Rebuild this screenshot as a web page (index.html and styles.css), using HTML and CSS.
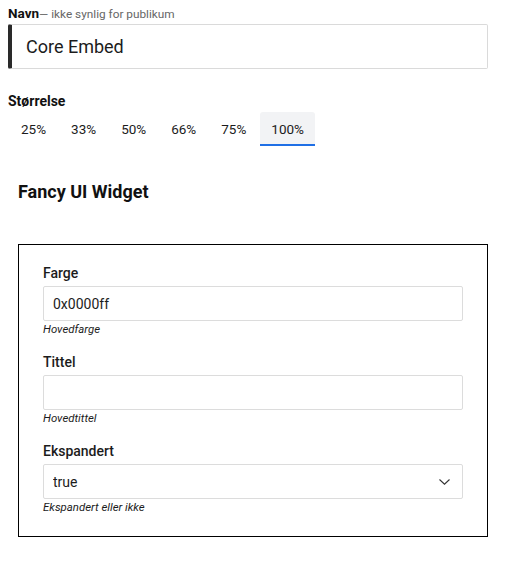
FILE: index.html
```html
<!DOCTYPE html>
<html lang="no">
<head>
<meta charset="utf-8">
<title>Core Embed</title>
<link rel="stylesheet" href="styles.css">
</head>
<body>
  <div class="name-label"><span class="name-strong">Navn</span><span class="name-hint">— ikke synlig for publikum</span></div>
  <input class="name-input" type="text" value="Core Embed">

  <div class="size-label">Størrelse</div>
  <div class="tabs">
    <div class="tab">25%</div>
    <div class="tab">33%</div>
    <div class="tab">50%</div>
    <div class="tab">66%</div>
    <div class="tab">75%</div>
    <div class="tab active">100%</div>
  </div>

  <div class="preview">
    <h2 class="widget-title">Fancy UI Widget</h2>
    <div class="widget-box">
      <div class="field">
        <label class="field-label">Farge</label>
        <input class="field-input" type="text" value="0x0000ff">
        <div class="field-help">Hovedfarge</div>
      </div>
      <div class="field">
        <label class="field-label">Tittel</label>
        <input class="field-input" type="text" value="">
        <div class="field-help">Hovedtittel</div>
      </div>
      <div class="field">
        <label class="field-label">Ekspandert</label>
        <div class="select-wrap">
          <select class="field-input field-select">
            <option>true</option>
            <option>false</option>
          </select>
          <svg class="chevron" width="11" height="6" viewBox="0 0 11 6"><polyline points="0.5,0.5 5.5,5.2 10.5,0.5" fill="none" stroke="#333" stroke-width="1.1"/></svg>
        </div>
        <div class="field-help">Ekspandert eller ikke</div>
      </div>
    </div>
  </div>
</body>
</html>
```

FILE: styles.css
```css
* { box-sizing: border-box; }

body {
  margin: 0;
  padding: 5px 24px 0 8px;
  font-family: Roboto, "Liberation Sans", sans-serif;
  color: #1c1c1c;
  background: #fff;
}

.name-label {
  line-height: 16px;
  height: 16px;
  white-space: nowrap;
}
.name-strong {
  font-size: 13.5px;
  font-weight: 700;
  color: #111;
}
.name-hint {
  font-size: 11.8px;
  color: #666;
}

.name-input {
  display: block;
  width: 480px;
  height: 45px;
  margin: 3px 0 0 0;
  padding: 0 0 0 14px;
  border: 1px solid #dadada;
  border-left: 4px solid #2a2a2a;
  border-radius: 2px;
  font-family: Roboto, "Liberation Sans", sans-serif;
  font-size: 18px;
  color: #1c1c1c;
  background: #fff;
  outline: none;
}

.size-label {
  margin-top: 24px;
  font-size: 14px;
  font-weight: 700;
  line-height: 16px;
  color: #111;
}

.tabs {
  display: flex;
  gap: 3px;
  margin: 3px 0 0 2px;
}
.tab {
  height: 34px;
  line-height: 34px;
  padding: 0 11px;
  font-size: 13.5px;
  color: #1c1c1c;
  border-radius: 3px 3px 0 0;
}
.tab.active {
  background: #f2f3f5;
  border-bottom: 2px solid #1f6fe5;
}

.preview {
  margin-left: 10px;
}

.widget-title {
  margin: 35px 0 0 0;
  font-size: 18px;
  font-weight: 700;
  line-height: 22px;
  color: #111;
}

.widget-box {
  margin-top: 41px;
  width: 470px;
  border: 1px solid #000;
  padding: 20px 24px 22px 24px;
  display: flex;
  flex-direction: column;
  gap: 18px;
}

.field {
  display: flex;
  flex-direction: column;
}
.field-label {
  font-size: 14px;
  font-weight: 500;
  line-height: 16px;
  color: #1c1c1c;
  margin-bottom: 5px;
}
.field-input {
  display: block;
  width: 100%;
  height: 35px;
  padding: 0 0 0 9px;
  border: 1px solid #dcdcdc;
  border-radius: 2px;
  font-family: Roboto, "Liberation Sans", sans-serif;
  font-size: 14px;
  color: #1c1c1c;
  background: #fff;
  outline: none;
}
.select-wrap {
  position: relative;
}
.field-select {
  appearance: none;
  -webkit-appearance: none;
}
.chevron {
  position: absolute;
  right: 13px;
  top: 15px;
  pointer-events: none;
}
.field-help {
  margin-top: 2px;
  font-size: 11.4px;
  font-style: italic;
  line-height: 13px;
  color: #1c1c1c;
}
```
